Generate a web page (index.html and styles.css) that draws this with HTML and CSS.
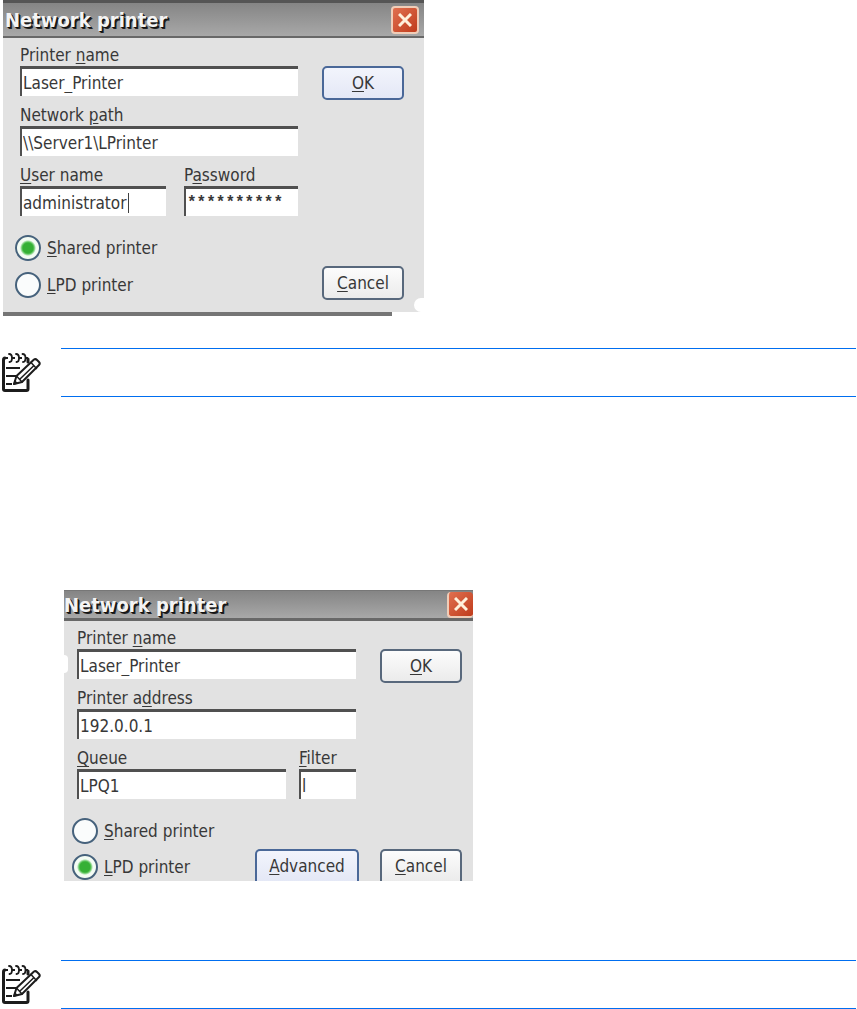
FILE: index.html
```html
<!DOCTYPE html>
<html lang="en">
<head>
  <meta charset="utf-8">
  <title>Network printer</title>
  <link rel="stylesheet" href="styles.css">
</head>
<body>

<!-- note icon, used twice -->
<svg class="defs" width="0" height="0" aria-hidden="true">
  <symbol id="noteIcon" viewBox="0 1 42 42">
    <g fill="none" stroke="#1c1c1c" stroke-linecap="round" stroke-linejoin="round">
      <path stroke-width="3" d="M28 29V38Q28 39.500 26.500 39.500H5Q3.500 39.500 3.500 38V9Q3.500 7 5 7M28 8V11"/>
      <path stroke-width="2" stroke-linecap="butt" d="M4 7H8M12 7H15M19 7H22M25 7H28"/>
      <path stroke-width="1.800" d="M9 3Q12 3 12 7Q12 11 9.500 11M16 3Q19 3 19 7Q19 11 16.500 11M22.500 3Q25.500 3 25.500 7Q25.500 11 23 11"/>
      <path stroke-width="2.200" stroke-linecap="butt" d="M6 17H20M6 25H16M6 33H12"/>
      <path stroke-width="2" fill="#fff" d="M14 33L16.500 25L34 8.500Q35.500 7.500 37 9L39 11Q40.500 12.500 39 14L22 31Z"/>
      <path stroke-width="1.500" d="M31 11.500L36.500 17.500M16.500 25L22 31M20 28L34 14.500"/>
    </g>
    <path fill="#1c1c1c" d="M13 34L14.500 29L18.500 32.500Z"/>
  </symbol>
</svg>

<form class="dialog shared">
  <div class="titleBar">
    <h2>Network printer</h2>
    <button type="button" class="close" aria-label="Close">
      <svg viewBox="0 0 14 14"><path d="M1 1L13 13M13 1L1 13"/></svg>
    </button>
  </div>
  <div class="content">
    <div class="main">
      <div class="fields">
        <div class="field">
          <label for="name1">Printer <u>n</u>ame</label>
          <input id="name1" type="text" value="Laser_Printer">
        </div>
        <div class="field">
          <label for="path1">Network <u>p</u>ath</label>
          <input id="path1" type="text" value="\\Server1\LPrinter">
        </div>
        <div class="pair">
          <div class="field user">
            <label for="user1"><u>U</u>ser name</label>
            <input id="user1" class="caret" type="text" value="administrator">
          </div>
          <div class="field">
            <label for="pass1">P<u>a</u>ssword</label>
            <input id="pass1" class="masked" type="text" value="**********">
          </div>
        </div>
      </div>
      <div class="options">
        <label class="option"><input type="radio" name="type1" checked><span><u>S</u>hared printer</span></label>
        <label class="option"><input type="radio" name="type1"><span><u>L</u>PD printer</span></label>
      </div>
    </div>
    <div class="buttons">
      <button type="button" class="btn default"><u>O</u>K</button>
      <button type="button" class="btn"><u>C</u>ancel</button>
    </div>
  </div>
</form>

<div class="note">
  <svg class="noteIcon"><use href="#noteIcon"/></svg>
  <div class="noteBox"></div>
</div>

<form class="dialog lpd">
  <div class="titleBar">
    <h2>Network printer</h2>
    <button type="button" class="close" aria-label="Close">
      <svg viewBox="0 0 14 14"><path d="M1 1L13 13M13 1L1 13"/></svg>
    </button>
  </div>
  <div class="content">
    <div class="main">
      <div class="fields">
        <div class="field">
          <label for="name2">Printer <u>n</u>ame</label>
          <input id="name2" type="text" value="Laser_Printer">
        </div>
        <div class="field">
          <label for="addr2">Printer a<u>d</u>dress</label>
          <input id="addr2" type="text" value="192.0.0.1">
        </div>
        <div class="pair">
          <div class="field queue">
            <label for="queue2"><u>Q</u>ueue</label>
            <input id="queue2" type="text" value="LPQ1">
          </div>
          <div class="field">
            <label for="filter2"><u>F</u>ilter</label>
            <input id="filter2" type="text" value="l">
          </div>
        </div>
      </div>
      <div class="bottom">
        <div class="options">
          <label class="option"><input type="radio" name="type2"><span><u>S</u>hared printer</span></label>
          <label class="option"><input type="radio" name="type2" checked><span><u>L</u>PD printer</span></label>
        </div>
        <button type="button" class="btn default advanced"><u>A</u>dvanced</button>
      </div>
    </div>
    <div class="buttons">
      <button type="button" class="btn"><u>O</u>K</button>
      <button type="button" class="btn"><u>C</u>ancel</button>
    </div>
  </div>
</form>

<div class="note">
  <svg class="noteIcon"><use href="#noteIcon"/></svg>
  <div class="noteBox"></div>
</div>

</body>
</html>
```

FILE: styles.css
```css
* {
  box-sizing: border-box;
}

body {
  margin: 0;
  background: #fff;
  color: #383838;
  font: 17px/22px "DejaVu Sans Condensed", "Noto Sans", sans-serif;
}

.defs {
  display: block;
}

u {
  text-underline-offset: 2px;
}

/* dialogs */
.dialog {
  position: relative;
  background: #e2e2e2;
}

.shared {
  max-width: 421px;
  margin: 0 0 32px 3px;
}

.lpd {
  max-width: 409px;
  margin: 193px 0 79px 64px;
}

.titleBar {
  display: flex;
  align-items: center;
  justify-content: space-between;
  height: 38px;
  padding: 0 5px 0 2px;
  background: linear-gradient(#858585, #a8a8a8);
  border-top: 3px solid #555;
  border-bottom: 2px solid #686868;
}

.lpd .titleBar {
  height: 31px;
  padding: 0;
  border-top: 1px solid #777;
  border-bottom-width: 3px;
}

.titleBar h2 {
  margin: 0;
  color: #f4f4f4;
  font-size: 20px;
  line-height: 24px;
  white-space: nowrap;
  text-shadow: 1px 1px 0 #111, 2px 2px 0 #222;
}

.close {
  width: 28px;
  height: 28px;
  padding: 5px;
  background: linear-gradient(135deg, #e07050, #c03c1c);
  border: 2px solid #f0cdb8;
  border-radius: 4px;
}

.lpd .close {
  width: 26px;
  height: 26px;
  border-width: 0 0 2px 2px;
}

.close svg {
  display: block;
  width: 14px;
  height: 14px;
  fill: none;
  stroke: #fff0dc;
  stroke-width: 3;
}

.content {
  display: flex;
  gap: 21px;
  padding: 6px 20px 12px 12px;
}

.lpd .content {
  padding: 6px 11px 0 8px;
}

/* bottom window edge stops short of the corner */
.shared::after {
  content: "";
  display: block;
  height: 4px;
  background: linear-gradient(to right, #757575 389px, #fff 389px);
}

.shared::before {
  content: "";
  position: absolute;
  right: 0;
  bottom: 4px;
  width: 10px;
  height: 14px;
  background: #fff;
  border-radius: 8px 0 0 8px;
}

.lpd::before {
  content: "";
  position: absolute;
  left: 0;
  top: 65px;
  width: 4px;
  height: 18px;
  background: #fff;
  border-radius: 0 4px 4px 0;
}

.main {
  flex: 1;
}

.fields {
  display: flex;
  flex-direction: column;
  gap: 8px;
  margin: 0 3px 0 5px;
}

.field {
  flex: 1;
  min-width: 0;
}

.field label {
  display: block;
  white-space: nowrap;
}

.field input {
  display: block;
  width: 100%;
  height: 30px;
  padding: 0 0 0 1px;
  color: inherit;
  font: inherit;
  background: #fff;
  border: 0;
  border-top: 3px solid #505050;
  border-left: 2px solid #505050;
  border-radius: 0;
  outline: 0;
}

.pair {
  display: flex;
  gap: 18px;
}

.lpd .pair {
  gap: 13px;
}

.user {
  flex: 0 0 146px;
}

.queue {
  flex: 0 0 209px;
}

.field .caret {
  background: linear-gradient(#404040, #404040) 106px 4px / 1px 20px no-repeat #fff;
}

.field .masked {
  font: bold 16px "Liberation Mono", monospace;
}

.options {
  display: flex;
  flex-direction: column;
  gap: 11px;
  padding: 19px 0 2px;
}

.lpd .options {
  gap: 10px;
  padding-bottom: 1px;
}

.option {
  display: flex;
  align-items: center;
  gap: 6px;
  white-space: nowrap;
}

.option input {
  appearance: none;
  width: 26px;
  height: 26px;
  margin: 0;
  background: #fafcfc;
  border: 2px solid #46627c;
  border-radius: 50%;
}

.option input:checked {
  background: radial-gradient(circle, #35b035 0 5px, #5cc45c 6px, #f4fcf4 8px);
}

.bottom {
  display: flex;
  align-items: flex-end;
  justify-content: space-between;
}

.buttons {
  display: flex;
  flex: 0 0 82px;
  flex-direction: column;
  justify-content: space-between;
  padding-top: 22px;
}

.btn {
  height: 34px;
  padding: 0;
  color: inherit;
  font: inherit;
  background: linear-gradient(#fcfcfc, #ebebeb);
  border: 2px solid #58687c;
  border-radius: 5px;
}

.default {
  background: linear-gradient(#f2f4fc, #e4e8f6);
  border-color: #4a6898;
}

.advanced {
  width: 104px;
}

/* the lower buttons run off the bottom of this one */
.lpd .advanced,
.lpd .buttons .btn:last-child {
  height: 32px;
  border-bottom: 0;
  border-radius: 5px 5px 0 0;
}

/* notes */
.note {
  display: flex;
  align-items: center;
  gap: 19px;
  margin-right: 1px;
}

.noteIcon {
  flex: none;
  width: 42px;
  height: 42px;
}

.noteBox {
  flex: 1;
  height: 49px;
  border-top: 1px solid #006ef0;
  border-bottom: 1px solid #006ef0;
}
```
